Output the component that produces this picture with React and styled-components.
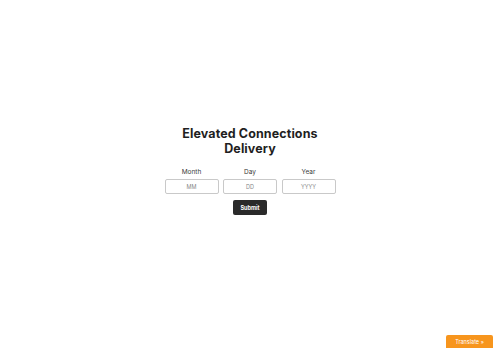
import React from "react";
import styled, { createGlobalStyle } from "styled-components";

const Global = createGlobalStyle`
  html, body { margin: 0; padding: 0; background: #fff; }
  body { font-family: Inter, "Noto Sans", sans-serif; color: #222; }
`;

const Page = styled.main`
  display: flex;
  flex-direction: column;
  align-items: center;
  padding-top: 127px;
`;

const Title = styled.h1`
  margin: 0;
  font-size: 12.5px;
  line-height: 14.5px;
  font-weight: 700;
  text-align: center;
  color: #1f1f1f;
  letter-spacing: 0.1px;
`;

const Fields = styled.div`
  display: grid;
  grid-template-columns: repeat(3, 54px);
  column-gap: 4.5px;
  margin-top: 12px;
`;

const Field = styled.label`
  display: flex;
  flex-direction: column;
  align-items: center;
  gap: 3px;
`;

const Label = styled.span`
  font-size: 6.5px;
  line-height: 8px;
  font-weight: 400;
  color: #3a3a3a;
`;

const Input = styled.input`
  box-sizing: border-box;
  width: 54px;
  height: 15px;
  border: 1px solid #c9c9c9;
  border-radius: 2px;
  padding: 0;
  font-family: inherit;
  font-size: 5.5px;
  text-align: center;
  outline: none;
  &::placeholder { color: #888; }
`;

const Submit = styled.button`
  margin-top: 6px;
  width: 34px;
  height: 15px;
  border: none;
  border-radius: 2px;
  background: #2a2a2a;
  color: #fff;
  font-family: inherit;
  font-size: 5.5px;
  font-weight: 700;
  padding: 0;
`;

const Translate = styled.button`
  position: fixed;
  right: 7px;
  bottom: 0;
  width: 47px;
  height: 13px;
  border: none;
  border-radius: 2px 2px 0 0;
  background: #f7951d;
  color: #fff;
  font-family: inherit;
  font-size: 5.5px;
  padding: 0;
`;

export default function App() {
  return (
    <>
      <Global />
      <Page>
        <Title>Elevated Connections<br />Delivery</Title>
        <Fields>
          <Field><Label>Month</Label><Input placeholder="MM" /></Field>
          <Field><Label>Day</Label><Input placeholder="DD" /></Field>
          <Field><Label>Year</Label><Input placeholder="YYYY" /></Field>
        </Fields>
        <Submit>Submit</Submit>
      </Page>
      <Translate>Translate »</Translate>
    </>
  );
}
